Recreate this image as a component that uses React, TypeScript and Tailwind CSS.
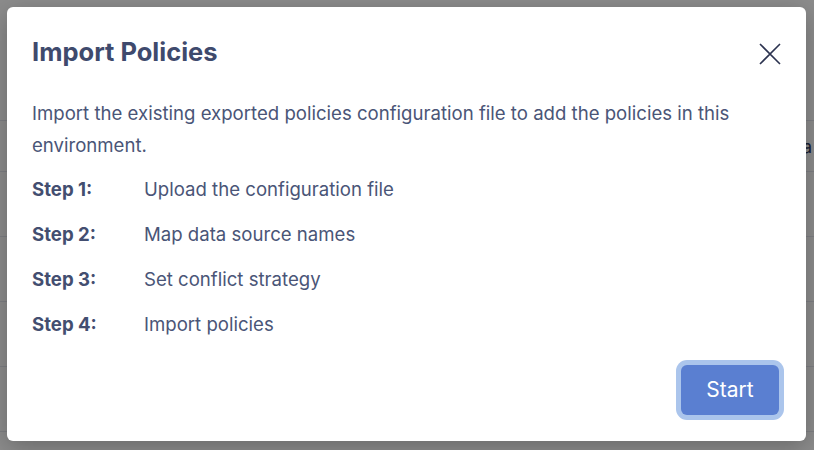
const steps = [
  { label: "Step 1:", text: "Upload the configuration file" },
  { label: "Step 2:", text: "Map data source names" },
  { label: "Step 3:", text: "Set conflict strategy" },
  { label: "Step 4:", text: "Import policies" },
];

function BackgroundPage() {
  return (
    <div className="flex h-full w-full flex-col">
      <div className="h-[121px] border-b border-[#e6e8ee]" />
      <div className="flex h-[51px] items-center justify-end border-b border-[#e6e8ee] pr-[2px] text-[18px] text-[#2f3a5c]">
        Data
      </div>
      {[0, 1, 2, 3].map((i) => (
        <div key={i} className="h-[65px] border-b border-[#e6e8ee]" />
      ))}
    </div>
  );
}

export default function App() {
  return (
    <div
      className="relative h-[450px] w-[814px] overflow-hidden bg-white"
      style={{ fontFamily: "Inter, 'Noto Sans', sans-serif" }}
    >
      <BackgroundPage />
      <div className="absolute inset-0 bg-black/45 pl-[7px] pt-[7px]">
        <div className="flex h-[434px] w-[799px] flex-col rounded-[6px] bg-white pl-[25px] pr-[26px] pt-[27px] pb-[25px] shadow-[0_6px_24px_rgba(0,0,0,0.25)]">
          <div className="flex items-start justify-between">
            <h2 className="text-[25.5px] font-bold leading-[36px] text-[#3f4a6d]">Import Policies</h2>
            <button className="mt-[9px] mr-[-1px] text-[#2c3350]">
              <svg width="22" height="22" viewBox="0 0 22 22" fill="none" stroke="currentColor" strokeWidth="1.6">
                <path d="M1 1L21 21M21 1L1 21" />
              </svg>
            </button>
          </div>
          <p className="mt-[27px] text-[18.6px] leading-[32px] text-[#4a5577]">
            Import the existing exported policies configuration file to add the policies in this
            environment.
          </p>
          <div className="mt-[13px] flex flex-col gap-[13px]">
            {steps.map((s) => (
              <div key={s.label} className="flex h-[32px] items-center text-[18.6px] text-[#4a5577]">
                <span className="w-[112px] font-bold text-[#434e70]">{s.label}</span>
                <span>{s.text}</span>
              </div>
            ))}
          </div>
          <div className="mt-auto flex justify-end">
            <button className="mb-[1px] mr-[1px] h-[50px] w-[98px] rounded-[6px] bg-[#5a7fd1] text-[21px] text-white ring-[5px] ring-[#abc5ec]">
              Start
            </button>
          </div>
        </div>
      </div>
    </div>
  );
}
